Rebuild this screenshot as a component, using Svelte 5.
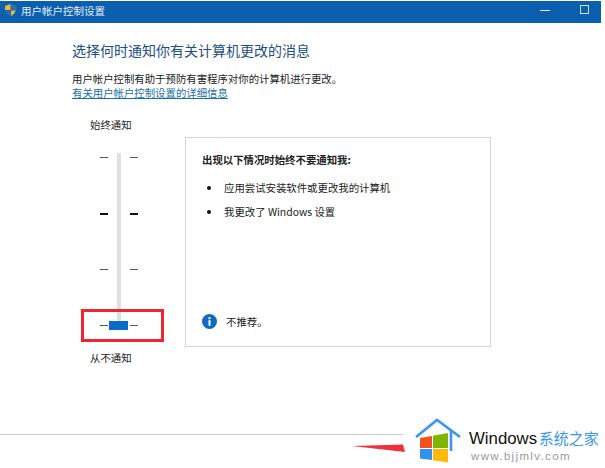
<script>
  const ticks = [0, 1, 2, 3];
</script>

<div class="window">
  <header class="titlebar">
    <svg class="shield" width="14" height="14" viewBox="0 0 14 14">
      <path d="M1 3 L6.5 1 V7 H1 Z" fill="#f2b632"/>
      <path d="M7 1 L12.5 3 V7 H7 Z" fill="#2f6fb5"/>
      <path d="M1.5 7.5 H6.5 V13 Q3 11.5 1.5 7.5 Z" fill="#2f6fb5"/>
      <path d="M7 7.5 H12 Q10.5 11.5 7 13 Z" fill="#f2b632"/>
    </svg>
    <span class="title">用户帐户控制设置</span>
    <span class="spacer"></span>
    <span class="minimize"></span>
    <span class="maximize"></span>
  </header>

  <main class="content">
    <h1>选择何时通知你有关计算机更改的消息</h1>
    <p class="intro">用户帐户控制有助于预防有害程序对你的计算机进行更改。</p>
    <a class="link" href="#details">有关用户帐户控制设置的详细信息</a>

    <div class="settings">
      <div class="slider-col">
        <div class="cap top">始终通知</div>
        <div class="slider">
          <div class="track"></div>
          <div class="ticks">
            {#each ticks as t}
              <div class="tick-row" class:bold={t === 1}>
                <i></i><i></i>
              </div>
            {/each}
          </div>
          <div class="thumb"></div>
        </div>
        <div class="cap bottom">从不通知</div>
      </div>

      <section class="panel">
        <div>
          <h2>出现以下情况时始终不要通知我:</h2>
          <ul>
            <li>应用尝试安装软件或更改我的计算机</li>
            <li>我更改了 Windows 设置</li>
          </ul>
        </div>
        <div class="note">
          <svg width="15" height="15" viewBox="0 0 15 15">
            <circle cx="7.5" cy="7.5" r="7.5" fill="#0f6cbd"/>
            <rect x="6.5" y="6.2" width="2" height="5.6" fill="#fff"/>
            <rect x="6.5" y="3.2" width="2" height="2" fill="#fff"/>
          </svg>
          <span>不推荐。</span>
        </div>
      </section>
    </div>
  </main>

  <div class="divider"></div>

  <div class="redbox"></div>
  <svg class="arrow" width="54" height="9" viewBox="0 0 54 9">
    <path d="M0 2 L51 0.5 L53 8 Z" fill="#f0303c"/>
  </svg>

  <div class="watermark">
    <svg width="46" height="46" viewBox="0 0 46 46">
      <path d="M1 19 L22 2 L45 19" fill="none" stroke="#3a97f0" stroke-width="2.6"/>
      <path d="M36 12 V33" fill="none" stroke="#3a97f0" stroke-width="2.6"/>
      <path d="M5 20 L17 18 V30 H5 Z" fill="#f4511e"/>
      <path d="M18 17.8 L33 15 V30 H18 Z" fill="#7cb600"/>
      <path d="M5 31 H17 V42 L5 40.5 Z" fill="#2f92ee"/>
      <path d="M18 31 H33 V44.5 L18 42.2 Z" fill="#ffba08"/>
    </svg>
    <div class="wm-text">
      <div class="wm-top"><b>Windows</b> <span>系统之家</span></div>
      <div class="wm-url">www.bjjmlv.com</div>
    </div>
  </div>
</div>

<style>
  :global(body) {
    margin: 0;
    background: #fff;
  }
  .window {
    position: relative;
    width: 605px;
    height: 468px;
    overflow: hidden;
    background: #fff;
    font-family: "Noto Sans CJK SC", "Liberation Sans", sans-serif;
    color: #222;
  }
  .titlebar {
    box-sizing: border-box;
    width: 601px;
    height: 22px;
    margin-top: 1px;
    padding: 0 12px 4px 4px;
    display: flex;
    align-items: center;
    background: #0a5fae;
    color: #e6eff8;
  }
  .shield {
    margin-right: 3px;
  }
  .title {
    font-size: 10.5px;
  }
  .spacer {
    flex: 1;
  }
  .minimize {
    width: 10px;
    height: 1px;
    background: #dfe9f3;
    margin-right: 30px;
  }
  .maximize {
    box-sizing: border-box;
    width: 9px;
    height: 9px;
    border: 1px solid #cfe0f0;
    margin-bottom: 2px;
  }
  .content {
    padding: 17px 0 0 72px;
  }
  h1 {
    margin: 0;
    font-size: 14px;
    line-height: 20px;
    font-weight: 400;
    color: #1b4f86;
  }
  .intro {
    margin: 11px 0 0;
    font-size: 10.4px;
    line-height: 15px;
  }
  .link {
    display: block;
    width: fit-content;
    font-size: 10.4px;
    line-height: 13px;
    color: #1c6ea8;
    text-decoration: underline;
  }
  .settings {
    display: flex;
    margin-top: 15px;
  }
  .slider-col {
    width: 113px;
    position: relative;
    padding-top: 4px;
  }
  .cap {
    font-size: 10.4px;
    line-height: 14px;
    margin-left: 18px;
  }
  .slider {
    position: relative;
    width: 66px;
    margin: 21px 0 0 24px;
    height: 178px;
  }
  .track {
    position: absolute;
    left: 21px;
    top: 0;
    width: 4px;
    height: 170px;
    background: #e0e0e0;
  }
  .ticks {
    display: flex;
    flex-direction: column;
    justify-content: space-between;
    padding-top: 4px;
    height: 169px;
  }
  .tick-row {
    display: flex;
    justify-content: space-between;
    width: 38px;
    margin-left: 4px;
  }
  .tick-row i {
    display: block;
    width: 8px;
    height: 1px;
    background: #555;
  }
  .tick-row.bold i {
    height: 2px;
    background: #111;
  }
  .thumb {
    position: absolute;
    left: 13px;
    top: 168px;
    width: 19px;
    height: 9px;
    background: #0a6cc6;
  }
  .cap.bottom {
    margin: 20px 0 0 18px;
  }
  .panel {
    box-sizing: border-box;
    width: 306px;
    height: 210px;
    margin-top: 23px;
    border: 1px solid #d4d4d4;
    padding: 15px 15px 17px 16px;
    display: flex;
    flex-direction: column;
    justify-content: space-between;
    font-size: 10.4px;
  }
  h2 {
    margin: 0;
    font-size: 10.4px;
    line-height: 14px;
    font-weight: 700;
  }
  ul {
    list-style: none;
    margin: 14px 0 0;
    padding: 0;
  }
  li {
    position: relative;
    padding-left: 22px;
    line-height: 14px;
    margin-bottom: 10px;
  }
  li::before {
    content: "";
    position: absolute;
    left: 5px;
    top: 5px;
    width: 4px;
    height: 4px;
    border-radius: 50%;
    background: #111;
  }
  .note {
    display: flex;
    align-items: center;
    gap: 9px;
  }
  .divider {
    position: absolute;
    left: 0;
    top: 434px;
    width: 403px;
    height: 1px;
    background: #cfcfcf;
  }
  .redbox {
    position: absolute;
    left: 81px;
    top: 309px;
    box-sizing: border-box;
    width: 83px;
    height: 33px;
    border: 3px solid #f0252f;
  }
  .arrow {
    position: absolute;
    left: 352px;
    top: 444px;
  }
  .watermark {
    position: absolute;
    left: 415px;
    top: 418px;
    width: 190px;
    height: 50px;
    display: flex;
    gap: 8px;
    background: #fff;
  }
  .wm-text {
    padding-top: 10px;
    font-family: "Liberation Sans", "Noto Sans CJK SC", sans-serif;
  }
  .wm-top {
    font-size: 16.8px;
    line-height: 20px;
    white-space: nowrap;
  }
  .wm-top b {
    font-weight: 400;
    color: #111;
  }
  .wm-top span {
    font-family: "Noto Sans CJK SC", sans-serif;
    font-size: 15px;
    color: #3a97f0;
    margin-left: -3px;
  }
  .wm-url {
    font-size: 11.5px;
    line-height: 14px;
    letter-spacing: 1.35px;
    color: #999;
    margin-left: 2px;
  }
</style>
